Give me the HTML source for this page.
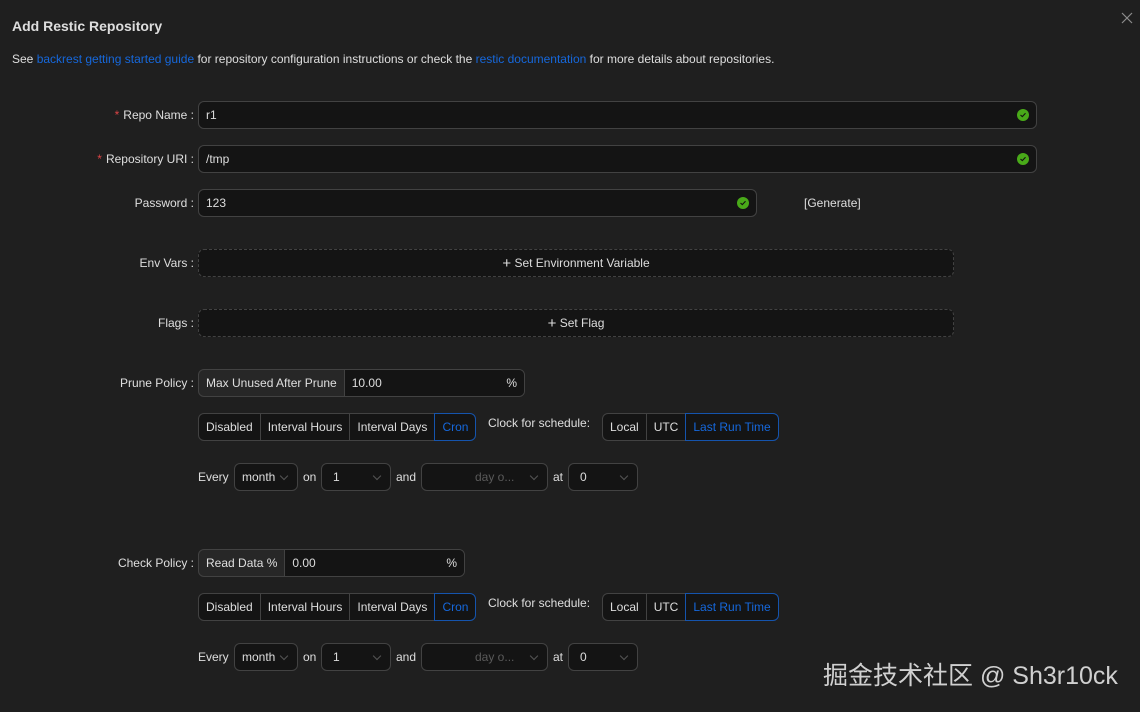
<!DOCTYPE html>
<html><head><meta charset="utf-8"><style>
*{box-sizing:border-box;margin:0;padding:0}
body{width:1140px;height:712px;background:#1f1f1f;font-family:"Liberation Sans",Arial,sans-serif;font-size:12px;color:rgba(255,255,255,.85);position:relative;overflow:hidden}
.a{position:absolute}
.t{position:absolute;line-height:14px;white-space:nowrap}
.lbl{position:absolute;right:946px;line-height:14px;white-space:nowrap}
.req{color:#dc4446;margin-right:4px}
.inp{position:absolute;background:#141414;border:1px solid #424242;border-radius:6px;height:28px;line-height:26px;padding-left:7px}
.ok{position:absolute;right:7px;top:7px;width:12px;height:12px;border-radius:50%;background:#49aa19}
.ok svg{position:absolute;left:2px;top:2px}
.dash{position:absolute;background:#141414;border:1px dashed #424242;border-radius:6px;height:28px;line-height:26px;text-align:center}
.addon{position:absolute;height:28px;border:1px solid #424242;border-radius:6px;display:flex;overflow:hidden;line-height:26px}
.addon .l{background:rgba(255,255,255,.04);border-right:1px solid #424242;padding:0 7px}
.addon .r{background:#141414;flex:1;padding:0 7px;position:relative}
.grp{position:absolute;height:28px;display:flex;line-height:26px}
.grp div{border:1px solid #424242;border-left:none;padding:0 7px;background:#141414}
.grp div:first-child{border-left:1px solid #424242;border-radius:6px 0 0 6px}
.grp div:last-child{border-radius:0 6px 6px 0}
.grp div.on{color:#1668dc;border:1px solid #1554ad;margin-left:-1px}
.sel{position:absolute;height:28px;background:#141414;border:1px solid #424242;border-radius:6px;line-height:26px;padding-left:11px}
.sel:after{content:"";position:absolute;right:10px;top:9px;width:5px;height:5px;border-right:1px solid #555;border-bottom:1px solid #555;transform:rotate(45deg)}
a{color:#1668dc;text-decoration:none}
</style></head><body>
<div class="t" style="left:12px;top:18px;font-size:14px;font-weight:bold;line-height:16px">Add Restic Repository</div>
<svg class="a" style="left:1121px;top:12px" width="12" height="12" viewBox="0 0 12 12"><path d="M1 1L11 11M11 1L1 11" stroke="#8c8c8c" stroke-width="1.2"/></svg>
<div class="t" style="left:12px;top:52px">See <a>backrest getting started guide</a> for repository configuration instructions or check the <a>restic documentation</a> for more details about repositories.</div>

<div class="lbl" style="top:108px"><span class="req">*</span>Repo Name :</div>
<div class="inp" style="left:198px;top:101px;width:839px">r1<span class="ok"><svg width="8" height="8" viewBox="0 0 8 8"><path d="M1.5 4L3.3 5.6L6.5 2.3" stroke="#111" stroke-width="1.1" fill="none"/></svg></span></div>
<div class="lbl" style="top:152px"><span class="req">*</span>Repository URI :</div>
<div class="inp" style="left:198px;top:145px;width:839px">/tmp<span class="ok"><svg width="8" height="8" viewBox="0 0 8 8"><path d="M1.5 4L3.3 5.6L6.5 2.3" stroke="#111" stroke-width="1.1" fill="none"/></svg></span></div>
<div class="lbl" style="top:196px">Password :</div>
<div class="inp" style="left:198px;top:189px;width:559px">123<span class="ok"><svg width="8" height="8" viewBox="0 0 8 8"><path d="M1.5 4L3.3 5.6L6.5 2.3" stroke="#111" stroke-width="1.1" fill="none"/></svg></span></div>
<div class="t" style="left:804px;top:196px">[Generate]</div>

<div class="lbl" style="top:256px">Env Vars :</div>
<div class="dash" style="left:198px;top:249px;width:756px"><span style="font-size:15px;vertical-align:-1px">+</span> Set Environment Variable</div>
<div class="lbl" style="top:316px">Flags :</div>
<div class="dash" style="left:198px;top:309px;width:756px"><span style="font-size:15px;vertical-align:-1px">+</span> Set Flag</div>

<div class="lbl" style="top:376px">Prune Policy :</div>
<div class="addon" style="left:198px;top:369px;width:327px"><div class="l">Max Unused After Prune</div><div class="r">10.00<span style="position:absolute;right:7px">%</span></div></div>
<div class="grp" style="left:198px;top:413px"><div>Disabled</div><div>Interval Hours</div><div>Interval Days</div><div class="on">Cron</div></div>
<div class="t" style="left:488px;top:416px">Clock for schedule:</div>
<div class="grp" style="left:602px;top:413px"><div>Local</div><div>UTC</div><div class="on">Last Run Time</div></div>
<div class="t" style="left:198px;top:470px">Every</div>
<div class="sel" style="left:234px;top:463px;width:64px;padding-left:7px">month</div>
<div class="t" style="left:303px;top:470px">on</div>
<div class="sel" style="left:321px;top:463px;width:70px">1</div>
<div class="t" style="left:396px;top:470px">and</div>
<div class="sel" style="left:421px;top:463px;width:127px;color:#5a5a5a;padding-left:53px">day o...</div>
<div class="t" style="left:553px;top:470px">at</div>
<div class="sel" style="left:568px;top:463px;width:70px">0</div>

<div class="lbl" style="top:556px">Check Policy :</div>
<div class="addon" style="left:198px;top:549px;width:267px"><div class="l">Read Data %</div><div class="r">0.00<span style="position:absolute;right:7px">%</span></div></div>
<div class="grp" style="left:198px;top:593px"><div>Disabled</div><div>Interval Hours</div><div>Interval Days</div><div class="on">Cron</div></div>
<div class="t" style="left:488px;top:596px">Clock for schedule:</div>
<div class="grp" style="left:602px;top:593px"><div>Local</div><div>UTC</div><div class="on">Last Run Time</div></div>
<div class="t" style="left:198px;top:650px">Every</div>
<div class="sel" style="left:234px;top:643px;width:64px;padding-left:7px">month</div>
<div class="t" style="left:303px;top:650px">on</div>
<div class="sel" style="left:321px;top:643px;width:70px">1</div>
<div class="t" style="left:396px;top:650px">and</div>
<div class="sel" style="left:421px;top:643px;width:127px;color:#5a5a5a;padding-left:53px">day o...</div>
<div class="t" style="left:553px;top:650px">at</div>
<div class="sel" style="left:568px;top:643px;width:70px">0</div>

<div class="t" style="left:823px;top:660px;font-size:25px;line-height:32px;color:#d0d0d0;font-family:'Liberation Sans','Noto Sans CJK SC',sans-serif">掘金技术社区 @ Sh3r10ck</div>
</body></html>
